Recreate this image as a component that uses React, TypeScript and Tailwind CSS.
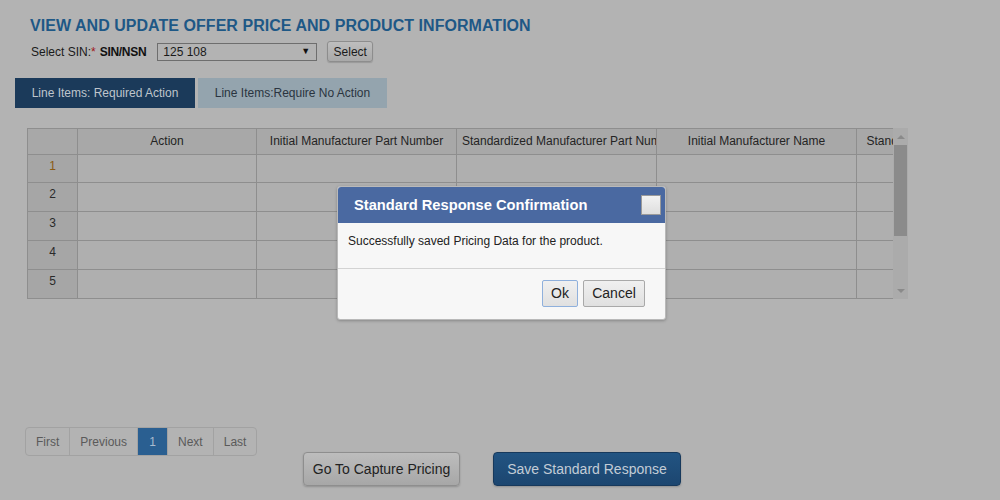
import React from "react";

const cols = [
  { w: 179, label: "Action" },
  { w: 200, label: "Initial Manufacturer Part Number" },
  { w: 200, label: "Standardized Manufacturer Part Number" },
  { w: 200, label: "Initial Manufacturer Name" },
  { w: 200, label: "Standardized Manufacturer Name" },
];

export default function App() {
  return (
    <div className="relative w-[1000px] h-[500px] overflow-hidden bg-[#b3b3b3] font-['Liberation_Sans',Arial,sans-serif] text-[12px] text-[#222]">
      <div className="pt-[16px]">
        <h1 className="pl-[30px] text-[16px] leading-[20px] font-bold text-[#1e5886] tracking-[0.04px]">
          VIEW AND UPDATE OFFER PRICE AND PRODUCT INFORMATION
        </h1>
        <div className="mt-[5px] pl-[31px] flex items-center h-[21px]">
          <span className="text-[#1a1a1a]">Select SIN:</span>
          <span className="text-[#a01818]">*</span>
          <span className="ml-[4px] font-bold text-[#111] tracking-[-0.3px]">SIN/NSN</span>
          <div className="ml-[11px] w-[160px] h-[18px] border border-[#6e6e6e] bg-[#b3b3b3] flex items-center pl-[5px] pr-[6px] justify-between">
            <span className="text-[#1a1a1a]">125 108</span>
            <span className="text-[9px] text-[#111]">▼</span>
          </div>
          <button className="ml-[10px] w-[46px] h-[21px] rounded-[3px] border border-[#8d8d8d] bg-gradient-to-b from-[#bebebe] to-[#a9a9a9] text-[12px] text-[#1a1a1a] shadow-[0_1px_1px_rgba(0,0,0,0.15)]">
            Select
          </button>
        </div>
        <div className="mt-[16px] pl-[15px] flex gap-[3px]">
          <div className="w-[180px] h-[30px] flex items-center justify-center bg-[#1b3a5a] text-[#bfc5cc]">
            Line Items: Required Action
          </div>
          <div className="w-[189px] h-[30px] flex items-center justify-center bg-[#94a4ae] text-[#2a3440]">
            Line Items:Require No Action
          </div>
        </div>

        <div className="mt-[20px] ml-[27px] w-[881px] h-[171px] flex">
          <div className="w-[866px] overflow-hidden">
            <div className="w-max border-t border-l border-[#8e8e8e]">
              <div className="flex h-[26px] bg-[#a8a8a8]">
                <div className="w-[50px] shrink-0 border-r border-b border-[#8e8e8e]" />
                {cols.map((c) => (
                  <div
                    key={c.label}
                    style={{ width: c.w }}
                    className="shrink-0 px-[5px] border-r border-b border-[#8e8e8e] overflow-hidden whitespace-nowrap text-center leading-[25px] text-[#242424]"
                  >
                    {c.label}
                  </div>
                ))}
              </div>
              {[1, 2, 3, 4, 5].map((n) => (
                <div key={n} className={`flex ${n === 1 ? "h-[28px]" : "h-[29px]"}`}>
                  <div
                    className={`w-[50px] shrink-0 border-r border-b border-[#8e8e8e] bg-[#a6a6a6] text-center pt-[2px] leading-[18px] ${n === 1 ? "text-[#8a5a14]" : "text-[#2a2a2a]"}`}
                  >
                    {n}
                  </div>
                  {cols.map((c) => (
                    <div
                      key={c.label}
                      style={{ width: c.w }}
                      className="shrink-0 border-r border-b border-[#8e8e8e] bg-[#afafaf]"
                    />
                  ))}
                </div>
              ))}
            </div>
          </div>
          <div className="w-[15px] h-[171px] bg-[#ababab] flex flex-col items-center">
            <div className="h-[17px] flex items-center justify-center">
              <div className="w-0 h-0 border-l-[4px] border-r-[4px] border-b-[4px] border-l-transparent border-r-transparent border-b-[#8a8a8a]" />
            </div>
            <div className="w-[13px] h-[91px] bg-[#8b8b8b]" />
            <div className="flex-1" />
            <div className="h-[17px] flex items-center justify-center">
              <div className="w-0 h-0 border-l-[4px] border-r-[4px] border-t-[4px] border-l-transparent border-r-transparent border-t-[#8a8a8a]" />
            </div>
          </div>
        </div>

        <div className="mt-[128px] ml-[25px] flex w-max h-[29px] rounded-[4px] border border-[#a2a2a2] text-[#5a5a5a]">
          <div className="px-[10px] flex items-center border-r border-[#a2a2a2]">First</div>
          <div className="px-[10px] flex items-center border-r border-[#a2a2a2]">Previous</div>
          <div className="w-[29px] flex items-center justify-center bg-[#2a5f91] text-[#a9bccf]">1</div>
          <div className="px-[10px] flex items-center border-r border-[#a2a2a2] border-l border-l-[#a2a2a2]">Next</div>
          <div className="px-[10px] flex items-center">Last</div>
        </div>

        <div className="mt-[-4px] flex justify-center gap-[33px] pr-[16px]">
          <button className="w-[157px] h-[34px] rounded-[4px] border border-[#8e8e8e] bg-gradient-to-b from-[#bdbdbd] to-[#a7a7a7] text-[14px] text-[#222] shadow-[0_1px_2px_rgba(0,0,0,0.2)]">
            Go To Capture Pricing
          </button>
          <button className="w-[188px] h-[34px] rounded-[4px] border border-[#17395c] bg-gradient-to-b from-[#225482] to-[#1c4670] text-[14px] text-[#c3ccd6] shadow-[0_1px_2px_rgba(0,0,0,0.2)]">
            Save Standard Response
          </button>
        </div>
      </div>

      <div className="absolute inset-0 flex items-start justify-center pt-[186px] pl-[3px]">
        <div className="w-[329px] h-[134px] bg-[#f7f7f7] border border-[#b9b9b9] rounded-[3px] shadow-[0_1px_3px_rgba(0,0,0,0.25)] flex flex-col">
          <div className="h-[36px] bg-[#4a69a1] rounded-t-[3px] flex items-center justify-between pl-[16px] pr-[4px]">
            <span className="text-[14.7px] font-bold text-white">Standard Response Confirmation</span>
            <div className="w-[20px] h-[20px] border border-[#9a9a9a] bg-gradient-to-b from-[#f2f2f2] to-[#dedede]" />
          </div>
          <div className="h-[45px] pl-[10px] pt-[11px] text-[12px] leading-[14px] text-[#222]">
            Successfully saved Pricing Data for the product.
          </div>
          <div className="border-t border-[#d3d3d3] flex-1 flex justify-end items-start pt-[11px] pr-[20px] gap-[5px]">
            <button className="w-[36px] h-[27px] rounded-[2px] border border-[#8fb0dc] bg-gradient-to-b from-[#f0f0f0] to-[#e0e0e0] text-[14px] text-[#222]">
              Ok
            </button>
            <button className="w-[62px] h-[27px] rounded-[2px] border border-[#a9a9a9] bg-gradient-to-b from-[#f0f0f0] to-[#e0e0e0] text-[14px] text-[#222]">
              Cancel
            </button>
          </div>
        </div>
      </div>
    </div>
  );
}
